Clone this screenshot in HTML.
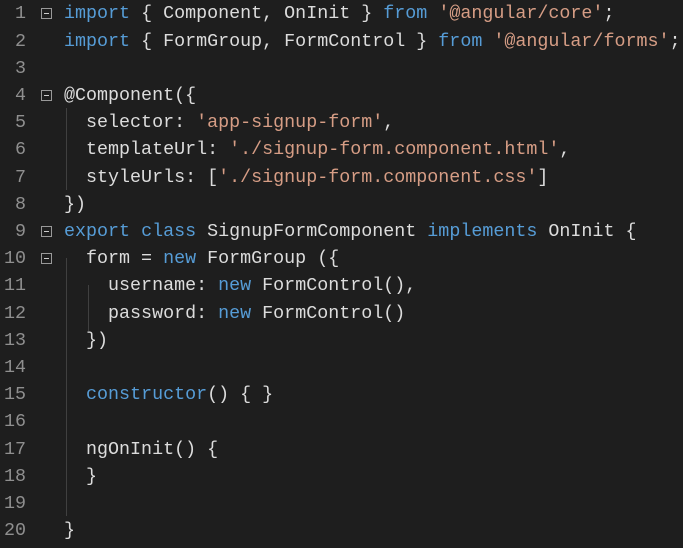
<!DOCTYPE html>
<html><head><meta charset="utf-8"><style>
html,body{margin:0;padding:0;background:#1e1e1e;width:683px;height:548px;overflow:hidden}
.l{position:absolute;left:0;height:27.2px;line-height:27.2px;font-family:"Liberation Mono",monospace;font-size:18.35px;color:#dcdcdc;white-space:pre}
.n{position:absolute;left:0;width:26px;text-align:right;color:#8f8f8f}
.c{position:absolute;left:64px}
.k{color:#569cd6}.s{color:#d69d85}
.f{position:absolute;left:41px;top:8px;width:11px;height:11px;border:1px solid #999;box-sizing:border-box}
.f:after{content:"";position:absolute;left:2px;top:4px;width:5px;height:1px;background:#ccc}
.g{position:absolute;width:1px;background:#404040}
</style></head><body>
<div class="g" style="left:66px;top:108px;height:82px"></div>
<div class="g" style="left:66px;top:258px;height:258px"></div>
<div class="g" style="left:88px;top:285px;height:46px"></div>
<div class="l" style="top:0.4px"><span class="n">1</span><span class="f"></span><span class="c"><span class="k">import</span> { Component, OnInit } <span class="k">from</span> <span class="s">'@angular/core'</span>;</span></div>
<div class="l" style="top:27.6px"><span class="n">2</span><span class="c"><span class="k">import</span> { FormGroup, FormControl } <span class="k">from</span> <span class="s">'@angular/forms'</span>;</span></div>
<div class="l" style="top:54.8px"><span class="n">3</span></div>
<div class="l" style="top:82px"><span class="n">4</span><span class="f"></span><span class="c">@Component({</span></div>
<div class="l" style="top:109.2px"><span class="n">5</span><span class="c">  selector: <span class="s">'app-signup-form'</span>,</span></div>
<div class="l" style="top:136.4px"><span class="n">6</span><span class="c">  templateUrl: <span class="s">'./signup-form.component.html'</span>,</span></div>
<div class="l" style="top:163.6px"><span class="n">7</span><span class="c">  styleUrls: [<span class="s">'./signup-form.component.css'</span>]</span></div>
<div class="l" style="top:190.8px"><span class="n">8</span><span class="c">})</span></div>
<div class="l" style="top:218px"><span class="n">9</span><span class="f"></span><span class="c"><span class="k">export</span> <span class="k">class</span> SignupFormComponent <span class="k">implements</span> OnInit {</span></div>
<div class="l" style="top:245.2px"><span class="n">10</span><span class="f"></span><span class="c">  form = <span class="k">new</span> FormGroup ({</span></div>
<div class="l" style="top:272.4px"><span class="n">11</span><span class="c">    username: <span class="k">new</span> FormControl(),</span></div>
<div class="l" style="top:299.6px"><span class="n">12</span><span class="c">    password: <span class="k">new</span> FormControl()</span></div>
<div class="l" style="top:326.8px"><span class="n">13</span><span class="c">  })</span></div>
<div class="l" style="top:354px"><span class="n">14</span></div>
<div class="l" style="top:381.2px"><span class="n">15</span><span class="c">  <span class="k">constructor</span>() { }</span></div>
<div class="l" style="top:408.4px"><span class="n">16</span></div>
<div class="l" style="top:435.6px"><span class="n">17</span><span class="c">  ngOnInit() {</span></div>
<div class="l" style="top:462.8px"><span class="n">18</span><span class="c">  }</span></div>
<div class="l" style="top:490px"><span class="n">19</span></div>
<div class="l" style="top:517.2px"><span class="n">20</span><span class="c">}</span></div>
</body></html>
